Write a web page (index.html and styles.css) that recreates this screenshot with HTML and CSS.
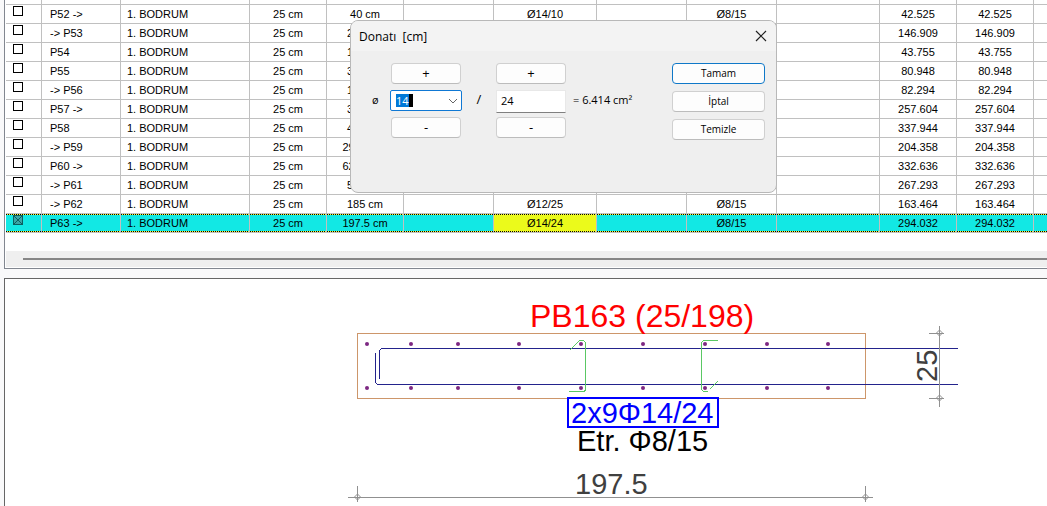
FILE: index.html
```html
<!DOCTYPE html>
<html lang="tr">
<head>
<meta charset="utf-8">
<title>Donatı</title>
<link rel="stylesheet" href="styles.css">
</head>
<body>
<section class="list-panel">
  <table class="grid">
    <colgroup>
      <col class="c-check"><col class="c-name"><col class="c-floor"><col class="c-size"><col class="c-size"><col class="c-gap"><col class="c-bar"><col class="c-gap"><col class="c-gap"><col class="c-bar"><col class="c-size"><col class="c-size"><col>
    </colgroup>
    <tbody id="rows">
      <tr class="cut"><td></td><td></td><td></td><td></td><td></td><td></td><td></td><td></td><td></td><td></td><td></td><td></td><td></td></tr>
    </tbody>
  </table>
  <div class="scroll"><div class="thumb"></div></div>
</section>

<section class="drawing-panel">
  <svg class="drawing" viewBox="5 279 1042 227" preserveAspectRatio="xMinYMin meet">
    <g class="crisp">
      <rect class="concrete" x="357.5" y="333.5" width="508" height="65"/>
      <path class="steel" d="M958 348.5H381.5L379.5 350.5V379M375.5 353V382.5L377.5 384.5H958"/>
      <path class="tie" d="M569.5 350.5L579.5 340.5H583.5L585.5 342.5V389.5L584.5 391.5H569M718 340.5H703.5L701.5 342.5V389.5L703.5 391.5H708M709.5 389.5L718 381"/>
      <path class="dim" d="M348 497.5H873M357.5 486V502M865.5 486V502M939.5 326V407M929 333.5H944M929 398.5H944"/>
    </g>
    <path class="dim" d="M354.5 497l3-3 3 3-3 3zM862.5 497l3-3 3 3-3 3zM936.5 333l3-3 3 3-3 3zM936.5 398l3-3 3 3-3 3z"/>
    <g class="dots" id="dots"></g>
    <rect class="callout" x="568" y="398" width="150" height="29"/>
    <text class="title" x="530" y="327">PB163 (25/198)</text>
    <text class="bars" x="571" y="423">2x9Φ14/24</text>
    <text class="note" x="577" y="451">Etr. Φ8/15</text>
    <text class="measure" x="575" y="494">197.5</text>
    <text class="measure" transform="translate(937 382) rotate(-90)">25</text>
  </svg>
</section>

<form class="dialog" role="dialog" aria-labelledby="dlg-title">
  <header class="bar">
    <span id="dlg-title">Donatı&nbsp; [cm]</span>
    <button type="button" class="close" aria-label="Kapat"><svg width="12" height="12" viewBox="0 0 12 12"><path d="M1 1L11 11M11 1L1 11"/></svg></button>
  </header>
  <div class="content">
    <label class="sign" for="dia">ø</label>
    <div class="stack inset">
      <button type="button" class="step">+</button>
      <div class="combo">
        <input id="dia" type="text" role="combobox" aria-expanded="false" value="14">
        <button type="button" class="drop" aria-label="Aç"><svg width="10" height="6" viewBox="0 0 10 6"><path d="M1 1L5 5L9 1"/></svg></button>
      </div>
      <button type="button" class="step">-</button>
    </div>
    <label class="sign slash" for="gap">/</label>
    <div class="stack">
      <button type="button" class="step">+</button>
      <input class="field" id="gap" type="text" value="24">
      <button type="button" class="step">-</button>
    </div>
    <output class="result">= 6.414 cm²</output>
    <div class="actions">
      <button type="submit" class="primary">Tamam</button>
      <button type="button">İptal</button>
      <button type="button">Temizle</button>
    </div>
  </div>
</form>
<script src="app.js"></script>
</body>
</html>
```
FILE: styles.css
```css
* { box-sizing: border-box; }
body {
  margin: 0;
  height: 100vh;
  padding-left: 4px;
  display: flex;
  flex-direction: column;
  gap: 9px;
  overflow: hidden;
  background: #f9f9fa;
  font-family: "Open Sans", "Noto Sans", sans-serif;
  font-size: 11px;
  color: #000;
}
button, input { font: inherit; color: inherit; margin: 0; padding: 0; }

.list-panel { background: #fff; border: solid #828790; border-width: 0 0 1px 1px; padding: 0 0 1px 1px; }
.grid { width: 100%; table-layout: fixed; border-collapse: separate; border-spacing: 0; font-family: "Liberation Sans", Arial, sans-serif; font-size: 11px; }
.c-check { width: 36px; }
.c-name { width: 79px; }
.c-floor { width: 129px; }
.c-size { width: 77px; }
.c-gap { width: 90px; }
.c-bar { width: 103px; }
.grid td { height: 19px; padding: 1px 0 0; border: solid #c0c0c0; border-width: 0 1px 1px 0; text-align: center; line-height: 17px; white-space: nowrap; overflow: hidden; }
.grid td:last-child { border-right-width: 0; }
.grid .cut td { height: 5px; padding: 0; line-height: 0; }
.grid td:nth-child(1) { text-align: left; padding-left: 7px; vertical-align: top; line-height: 0; }
.grid td:nth-child(2) { text-align: left; padding-left: 8px; }
.grid td:nth-child(3) { text-align: left; padding-left: 6px; }
.grid input { appearance: none; width: 10px; height: 10px; border: 1px solid #000; background: #fff; }
.grid .selected td {
  background:
    repeating-linear-gradient(90deg, #000 0 1px, #ff3 1px 2px) 0 0 / 100% 1px no-repeat,
    repeating-linear-gradient(90deg, #000 0 1px, #ff3 1px 2px) 0 17px / 100% 1px no-repeat,
    #12e8e4;
}
.grid .selected td:nth-child(7) { background-color: #ebfa1b; }
.grid .selected input {
  border-color: #0b5f60;
  background:
    linear-gradient(45deg, transparent 45%, #0b5f60 45% 55%, transparent 55%),
    linear-gradient(-45deg, transparent 45%, #0b5f60 45% 55%, transparent 55%),
    #3aa5a6;
}
.scroll { height: 16px; margin-top: 18px; padding: 7px 0 0 17px; background: #efefef; }
.thumb { height: 2px; background: #868686; }

.drawing-panel { flex: 1; min-height: 0; background: #fff; border: solid #666; border-width: 1px 0 0 1px; }
.drawing { display: block; width: 100%; font-family: "Liberation Sans", Arial, sans-serif; }
.drawing path, .drawing rect { fill: none; stroke-width: 1; }
.crisp { shape-rendering: crispEdges; }
.drawing .concrete { stroke: #cd966a; }
.drawing .steel { stroke: #23238c; }
.drawing .tie { stroke: #5ac864; }
.drawing .dim { stroke: #909090; }
.drawing .callout { stroke: #00f; stroke-width: 2; }
.dots { fill: #7d2882; }
.title { fill: #f00; font-size: 32px; }
.bars { fill: #00f; font-size: 29px; }
.note { fill: #000; font-size: 29px; }
.measure { fill: #404040; font-size: 29px; }

.dialog { position: absolute; left: 350px; top: 20px; width: 427px; height: 173px; border: 1px solid #b8b8b8; border-radius: 8px; background: #efefef; overflow: hidden; }
.bar { display: flex; justify-content: space-between; align-items: center; height: 30px; padding: 0 9px 0 8px; background: #f3f3f3; font-size: 12px; }
.close { display: flex; border: 0; background: none; }
.close path, .drop path { fill: none; stroke: #222; stroke-width: 1.2; }
.drop path { stroke: #666; stroke-width: 1; }
.content { display: grid; grid-template-columns: 18px 72px 34px 70px 1fr 93px; align-items: start; padding: 12px 11px 0 21px; }
.content button { height: 21px; border: 1px solid #d0d0d0; border-bottom-color: #bcbcbc; border-radius: 4px; background: #fdfdfd; line-height: 19px; text-align: center; }
.content .primary { border-color: #0f78c8; }
.content .step { font-size: 13px; }
.sign, .result { line-height: 19px; padding-top: 27px; }
.slash { text-align: center; font-size: 13px; }
.result { padding-left: 7px; }
.stack, .actions { display: grid; row-gap: 6px; grid-template-rows: 21px 21px 21px; }
.actions { row-gap: 7px; font-size: 10px; }
.inset .step { margin: 0 1px; }
.combo { display: flex; align-items: center; justify-content: space-between; padding: 0 3px 0 5px; border: 1px solid #0f78d4; border-radius: 2px; background: #fff; }
.combo input { width: 17px; height: 13px; border: solid #000; border-width: 0 4px 0 0; background: #0078d7; color: #fff; line-height: 13px; outline: 0; }
.content .drop { display: flex; height: 6px; border: 0; background: none; }
.field { width: 100%; height: 23px; padding: 0 0 2px 4px; border: 1px solid #e8e8e8; border-bottom-color: #808080; background: #fff; }
```
FILE: app.js
```js
const rows = [
  ["P52 ->", "40 cm", "Ø14/10", "Ø8/15", "42.525"],
  ["-> P53", "210 cm", "", "", "146.909"],
  ["P54", "100 cm", "", "", "43.755"],
  ["P55", "300 cm", "", "", "80.948"],
  ["-> P56", "100 cm", "", "", "82.294"],
  ["P57 ->", "300 cm", "", "", "257.604"],
  ["P58", "400 cm", "", "", "337.944"],
  ["-> P59", "292.5 cm", "", "", "204.358"],
  ["P60 ->", "622.5 cm", "", "", "332.636"],
  ["-> P61", "500 cm", "", "", "267.293"],
  ["-> P62", "185 cm", "Ø12/25", "Ø8/15", "163.464"],
  ["P63 ->", "197.5 cm", "Ø14/24", "Ø8/15", "294.032"]
];
const body = document.getElementById("rows");
rows.forEach(([name, size, bar, tie, load], i) => {
  const last = i === rows.length - 1;
  const tr = document.createElement("tr");
  if (last) tr.className = "selected";
  const cells = [name, "1. BODRUM", "25 cm", size, "", bar, "", tie, "", load, load, ""];
  tr.innerHTML = `<td><input type="checkbox" aria-label="${name.replace(">", "&gt;")}"${last ? " checked" : ""}></td>`;
  cells.forEach(text => { tr.insertCell().textContent = text; });
  body.append(tr);
});

const dots = document.getElementById("dots");
for (const x of [367, 411, 458, 519, 581, 643, 705, 767, 828]) {
  for (const y of [344, 388]) {
    const c = document.createElementNS("http://www.w3.org/2000/svg", "circle");
    c.setAttribute("cx", x);
    c.setAttribute("cy", y);
    c.setAttribute("r", 2);
    dots.append(c);
  }
}
```
